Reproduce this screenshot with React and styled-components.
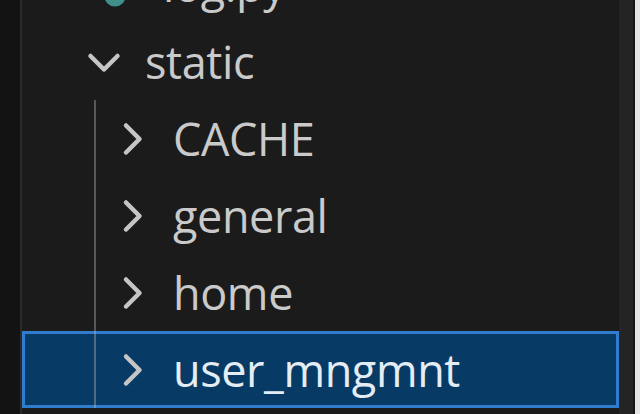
import React from 'react'
import styled, { createGlobalStyle } from 'styled-components'

const GlobalStyle = createGlobalStyle`
  html, body {
    margin: 0;
    padding: 0;
    background: #1a1a1a;
    overflow: hidden;
  }
`

const Frame = styled.div`
  display: flex;
  height: 414px;
  width: 640px;
  overflow: hidden;
  font-family: "Open Sans", "Noto Sans", sans-serif;
`

const LeftStrip = styled.div`
  width: 20px;
  background: #131313;
  border-right: 2px solid #2a2a2a;
`

const Tree = styled.div`
  flex: 1;
  background: #1b1b1b;
  display: flex;
  flex-direction: column;
  margin-top: -54px;
`

const Scrollbar = styled.div`
  width: 14px;
  background: #242424;
`

const Gap = styled.div`
  width: 2px;
  background: #161616;
`

const Edge = styled.div`
  width: 5px;
  background: #e4e4e4;
`

const Row = styled.div`
  box-sizing: border-box;
  height: 77px;
  display: flex;
  align-items: center;
  padding-left: ${p => 55 + p.$depth * 28}px;
  border: 3px solid ${p => (p.$selected ? '#2f7dcc' : 'transparent')};
  background: ${p => (p.$selected ? '#073a64' : 'transparent')};
  color: ${p => (p.$selected ? '#e4ecf4' : '#cacaca')};
  font-size: 45px;
  letter-spacing: -0.4px;
  white-space: nowrap;
`

const Twistie = styled.div`
  width: 48px;
  height: 48px;
  flex: none;
  display: flex;
  align-items: ${p => (p.$end ? 'flex-end' : 'center')};
  justify-content: ${p => (p.$end ? 'flex-end' : 'center')};
  color: #c5c5c5;
`

const Label = styled.span`
  margin-left: ${p => (p.$file ? 35 : 17)}px;
`

const ChildGroup = styled.div`
  position: relative;
  display: flex;
  flex-direction: column;

  &::before {
    content: '';
    position: absolute;
    left: 72px;
    top: 0;
    bottom: 0;
    width: 2px;
    background: rgba(190, 190, 190, 0.38);
    z-index: 1;
  }
`

const IconWrap = styled.span`
  display: flex;
  margin-bottom: 0;
`

const Chevron = ({ open }) => (
  <svg width="48" height="48" viewBox="0 0 16 16" fill="none">
    <polyline
      points={open ? '3.5,6 8,10.5 12.5,6' : '6,3.5 10.5,8 6,12.5'}
      stroke="currentColor"
      strokeWidth="1.5"
      strokeLinecap="round"
      strokeLinejoin="round"
    />
  </svg>
)

const FileIcon = () => (
  <IconWrap>
    <svg width="26" height="26" viewBox="0 0 16 16">
      <circle cx="8" cy="8" r="6.5" fill="#3f8f8a" />
    </svg>
  </IconWrap>
)

const children = ['CACHE', 'general', 'home', 'user_mngmnt']

export default function App() {
  return (
    <Frame>
      <GlobalStyle />
      <LeftStrip />
      <Tree>
        <Row $depth={0}>
          <Twistie $end>
            <FileIcon />
          </Twistie>
          <Label $file>log.py</Label>
        </Row>
        <Row $depth={0}>
          <Twistie>
            <Chevron open />
          </Twistie>
          <Label>static</Label>
        </Row>
        <ChildGroup>
          {children.map(name => (
            <Row key={name} $depth={1} $selected={name === 'user_mngmnt'}>
              <Twistie>
                <Chevron />
              </Twistie>
              <Label>{name}</Label>
            </Row>
          ))}
        </ChildGroup>
      </Tree>
      <Scrollbar />
      <Gap />
      <Edge />
    </Frame>
  )
}
